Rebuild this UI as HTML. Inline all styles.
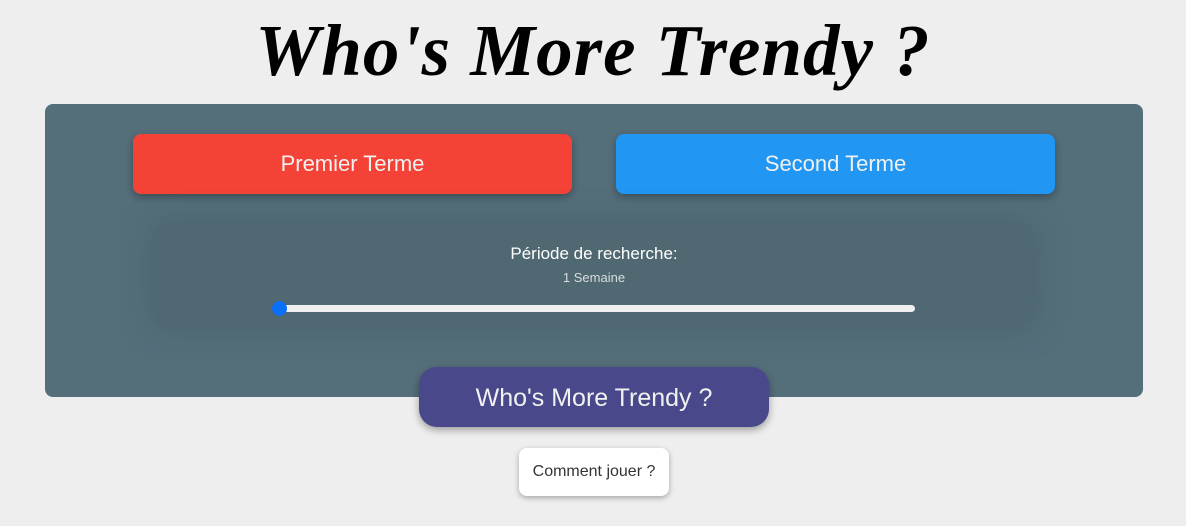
<!DOCTYPE html>
<html><head><meta charset="utf-8"><style>
*{box-sizing:border-box;margin:0;padding:0}
body{width:1186px;height:526px;background:#eeeeee;font-family:"Liberation Sans",sans-serif;position:relative;overflow:hidden}
.title{position:absolute;left:0;width:1186px;top:6px;text-align:center;font-family:"Liberation Serif",serif;font-style:italic;font-weight:bold;font-size:73px;line-height:90px;color:#000;letter-spacing:1px}
.panel{position:absolute;left:45px;top:104px;width:1098px;height:293px;background:#546e7a;border-radius:8px}
.btn{position:absolute;top:134px;width:439px;height:60px;border-radius:8px;color:#f1f1f1;font-size:22px;text-align:center;line-height:60px;box-shadow:0 3px 8px rgba(0,0,0,.3)}
.inner{position:absolute;left:155px;top:224px;width:878px;height:102px;background:#506872;border-radius:10px;box-shadow:0 0 30px rgba(70,90,100,.6);text-align:center;color:#fff}
.track{position:absolute;left:279px;top:305px;width:636px;height:7px;background:#efefef;border-radius:4px}
.thumb{position:absolute;left:272px;top:301px;width:15px;height:15px;border-radius:50%;background:#0b6ff5}
.go{position:absolute;left:419px;top:367px;width:350px;height:60px;background:#48488a;border-radius:18px;color:#f1f1f1;font-size:25px;text-align:center;line-height:62px;box-shadow:0 3px 8px rgba(0,0,0,.35)}
.how{position:absolute;left:519px;top:448px;width:150px;height:48px;background:#fff;border-radius:8px;font-size:16px;text-align:center;line-height:48px;color:#333;box-shadow:0 2px 6px rgba(0,0,0,.3)}
</style></head><body>
<div class="title">Who's More Trendy ?</div>
<div class="panel"></div>
<div class="btn" style="left:133px;background:#f44336">Premier Terme</div>
<div class="btn" style="left:616px;background:#2196f3">Second Terme</div>
<div class="inner">
<div style="margin-top:20px;font-size:17px;line-height:20px">Période de recherche:</div>
<div style="margin-top:6px;font-size:13px;color:#d8dde0">1 Semaine</div>
</div>
<div class="track"></div><div class="thumb"></div>
<div class="go">Who's More Trendy ?</div>
<div class="how">Comment jouer ?</div>
</body></html>
